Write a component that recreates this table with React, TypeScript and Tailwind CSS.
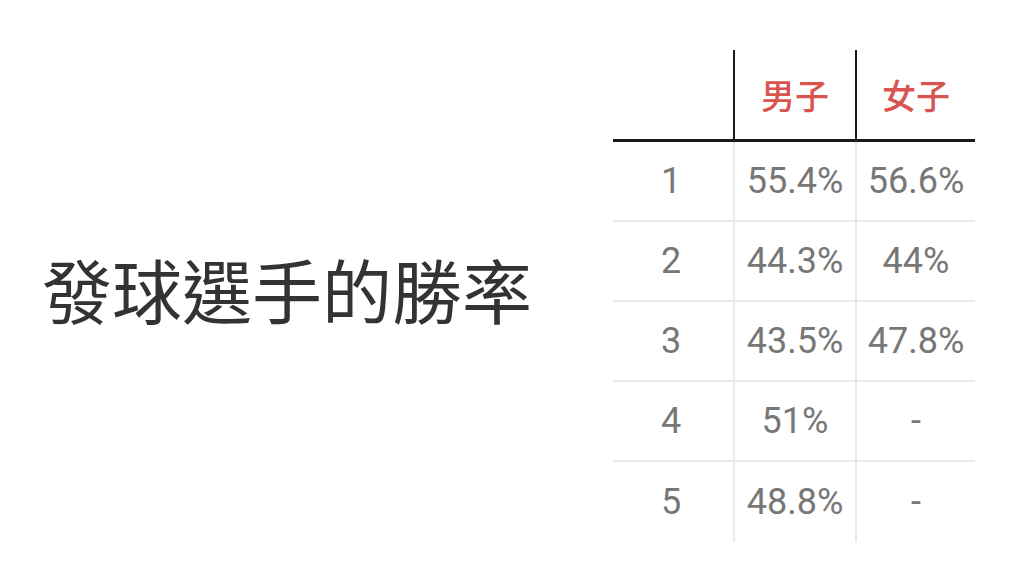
const rows = [
  ["1", "55.4%", "56.6%"],
  ["2", "44.3%", "44%"],
  ["3", "43.5%", "47.8%"],
  ["4", "51%", "-"],
  ["5", "48.8%", "-"],
];

export default function App() {
  return (
    <div className="w-[1024px] h-[587px] bg-white flex items-center justify-between pl-[42px] pr-[49px] overflow-hidden">
      <h1
        className="text-[70px] leading-none text-[#333333] mb-[10px]"
        style={{ fontFamily: '"Noto Sans CJK TC", "Noto Sans", sans-serif' }}
      >
        發球選手的勝率
      </h1>

      <div
        className="flex flex-col mt-[4px]"
        style={{ fontFamily: 'Roboto, "Noto Sans CJK TC", sans-serif' }}
      >
        {/* header */}
        <div className="grid grid-cols-[120px_122px_120px] h-[92px] border-b-[3px] border-[#1a1a1a]">
          <div />
          <div className="border-l-2 border-[#1a1a1a] flex items-center justify-center text-[34px] font-medium text-[#d9534f] pt-[6px]">
            男子
          </div>
          <div className="border-l-2 border-[#1a1a1a] flex items-center justify-center text-[34px] font-medium text-[#d9534f] pt-[6px]">
            女子
          </div>
        </div>

        {rows.map((r, i) => (
          <div
            key={r[0]}
            className={
              "grid grid-cols-[120px_122px_120px] h-[80px] text-[36px] text-[#777777] " +
              (i < rows.length - 1 ? "border-b-2 border-[#e8e8ee]" : "")
            }
          >
            <div className="flex items-center justify-center pr-[4px]">{r[0]}</div>
            <div className="border-l-2 border-[#e8e8ee] flex items-center justify-center">{r[1]}</div>
            <div className="border-l-2 border-[#e8e8ee] flex items-center justify-center">{r[2]}</div>
          </div>
        ))}
      </div>
    </div>
  );
}
